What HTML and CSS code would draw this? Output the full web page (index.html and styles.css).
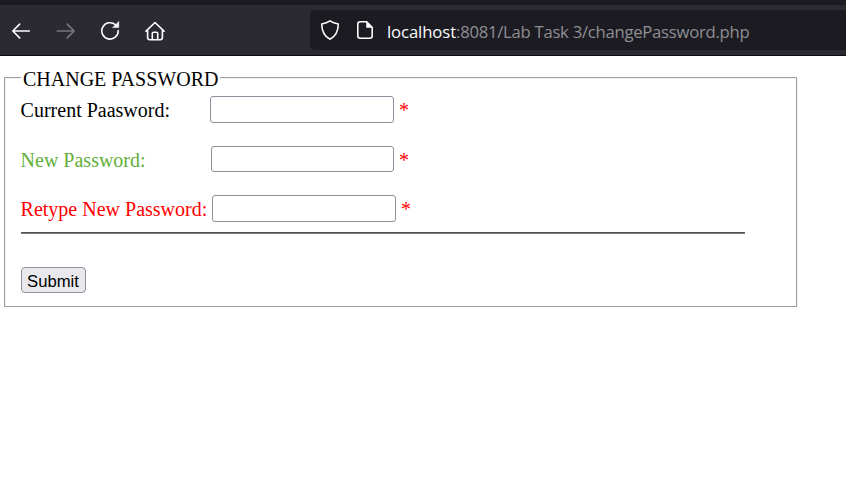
FILE: index.html
```html
<!DOCTYPE html>
<html lang="en">
<head>
<meta charset="utf-8">
<title>Change Password</title>
<link rel="stylesheet" href="styles.css">
</head>
<body>
<header class="toolbar">
  <nav class="nav">
    <svg class="icon" viewBox="0 0 20 20"><path d="M18.3 10H1.8M8.7 3.1 1.8 10l6.9 6.9"/></svg>
    <svg class="icon dim" viewBox="0 0 20 20"><path d="M1.3 10h16.9M11.2 3.1l6.9 6.9-6.9 6.9"/></svg>
    <svg class="icon" viewBox="0 0 20 20"><path d="M15.6 3.9A8.200 8.200 0 1 0 18.200 9.500"/><path class="solid" d="M18.800 .700v5.900h-6z"/></svg>
    <svg class="icon" viewBox="0 0 20 20"><path d="M1 10.2 10 1.500l9 8.700M2.600 9v7.500q0 2.200 2.200 2.200h10.400q2.200 0 2.200-2.200V9M7.300 18.500v-6q0-1.200 1.200-1.200h3q1.200 0 1.200 1.200v6"/></svg>
  </nav>
  <div class="address">
    <svg class="icon" viewBox="0 0 20 20"><path d="M10 .9c2.200 1.500 5 2.500 8.300 3.100-.1 7.500-2.500 12.300-8.300 15.200C4.200 16.300 1.800 11.500 1.700 4 5 3.400 7.800 2.400 10 .9z"/></svg>
    <svg class="icon page" viewBox="0 0 20 20"><path d="M11.500 1.800H5.200q-2.400 0-2.400 2.400v11.600q0 2.400 2.400 2.400h9.600q2.400 0 2.400-2.400V7.500z"/><path class="solid" d="M11.500 1.500v6h6z"/></svg>
    <span class="url"><b>localhost</b>:8081/Lab Task 3/changePassword.php</span>
  </div>
</header>
<main>
  <form>
    <fieldset>
      <legend>CHANGE PASSWORD</legend>
      <div class="row current"><label for="current">Current Paasword:</label><input id="current" type="password"><span class="required">*</span></div>
      <div class="row new"><label for="new">New Password:</label><input id="new" type="password"><span class="required">*</span></div>
      <div class="row retype"><label for="retype">Retype New Password:</label><input id="retype" type="password"><span class="required">*</span></div>
      <hr>
      <button type="button">Submit</button>
    </fieldset>
  </form>
</main>
</body>
</html>
```
FILE: styles.css
```css
* { box-sizing: border-box; }
body {
  margin: 0;
  background: #fff;
  color: #000;
  font: 20px/22px "Liberation Serif", serif;
}
.toolbar {
  display: flex;
  height: 56px;
  padding-top: 5px;
  background: #2b2a33;
  border-top: 5px solid #1c1b22;
  border-bottom: 1px solid #0c0c0d;
}
.nav {
  display: flex;
  gap: 24.700px;
  width: 310px;
  padding: 11px 0 0 11px;
}
.icon {
  flex: none;
  width: 20px;
  height: 20px;
  fill: none;
  stroke: #fbfbfe;
  stroke-width: 1.6;
  stroke-linecap: round;
  stroke-linejoin: round;
}
.dim { stroke: #77767c; }
.solid { fill: #fbfbfe; stroke-width: .5; }
.address {
  display: flex;
  flex: 1;
  height: 40px;
  padding: 10px 0 0 10px;
  background: #1c1b22;
  border-radius: 5px 0 0 5px;
}
.page { margin-left: 15px; }
.url {
  margin: 1px 0 0 12px;
  color: #8f8f94;
  font: 16.7px/22px "Open Sans", sans-serif;
  letter-spacing: -.27px;
  white-space: nowrap;
}
.url b { color: #fbfbfe; font-weight: 400; letter-spacing: -.1px; }
main { padding: 12px 0 0 4px; }
fieldset {
  width: 793px;
  height: 239px;
  margin: 0;
  padding: 10px 15px 0;
  border: 1px solid #a0a0a0;
  box-shadow: inset 1px 1px #f0f0f0, 1px 1px #f0f0f0;
}
legend {
  height: 18px;
  margin-left: 1px;
  padding: 0 2px;
  background: #fff;
}
.row { display: flex; height: 27px; line-height: 28px; }
.row label { flex: none; width: 190px; padding-left: .6px; white-space: nowrap; }
.new label { width: 191px; color: #62b03c; }
.retype label { width: 192px; color: red; }
.row input {
  width: 184px;
  height: 27px;
  margin: 0;
  padding: 1px 2px;
  background: #fff;
  border: 1px solid #8f8f9d;
  border-radius: 3px;
}
.new { margin-top: 23px; }
.new input { width: 183px; height: 26px; }
.retype { margin-top: 22px; }
.required { margin-left: 5px; color: red; }
hr {
  width: 724px;
  height: 2px;
  margin: 10px 0 33px 1px;
  border: 0;
  border-top: 1px solid #505050;
  background: #808080;
}
button {
  display: block;
  width: 65px;
  height: 26px;
  margin-left: 1px;
  padding: 3px 1px 0 0;
  border: 1px solid #8f8f9d;
  border-radius: 4px;
  background: #e9e9ed;
  color: #000;
  font: 16.7px/20px "Liberation Sans", sans-serif;
}
```
